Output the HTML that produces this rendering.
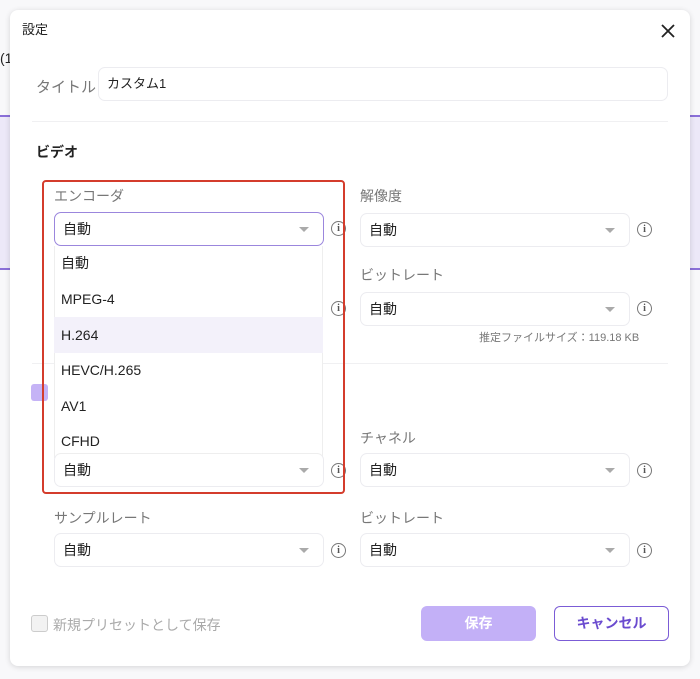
<!DOCTYPE html>
<html><head><meta charset="utf-8"><style>
*{box-sizing:border-box;margin:0;padding:0}
body{width:700px;height:679px;position:relative;overflow:hidden;background:#f8f8fa;font-family:"Liberation Sans","Noto Sans CJK JP",sans-serif;color:#222}
.a{position:absolute}
.dlg{left:10px;top:10px;width:680px;height:656px;background:#fff;border-radius:8px;box-shadow:0 1px 6px rgba(0,0,0,.15)}
.lbl{font-size:14px;color:#777}
.sel{position:absolute;height:34px;width:270px;border:1px solid #ececf0;border-radius:7px;background:#fff;font-size:14px;padding-left:8px;line-height:32px;color:#222}
.sel:after{content:"";position:absolute;right:14px;top:14px;border-left:5px solid transparent;border-right:5px solid transparent;border-top:5px solid #aaa}
.info{position:absolute;width:15px;height:15px;border:1.2px solid #777;border-radius:50%;font-size:10px;line-height:13px;text-align:center;color:#555;font-family:"Liberation Serif",serif;font-weight:bold}
.it{position:absolute;left:54px;width:269px;height:36px;font-size:14px;line-height:36px;padding-left:7px;color:#222}
</style></head><body>
<div class="a" style="left:0;top:115px;width:10px;height:155px;background:#ece8f8;border-top:2px solid #8a6fd8;border-bottom:2px solid #8a6fd8"></div>
<div class="a" style="left:690px;top:115px;width:10px;height:155px;background:#ece8f8;border-top:2px solid #8a6fd8;border-bottom:2px solid #8a6fd8"></div>
<div class="a" style="left:0;top:50px;font-size:14px">(1</div>
<div class="a dlg"></div>
<div class="a" style="left:22px;top:19px;font-size:13px">設定</div>
<svg class="a" style="left:660px;top:23px" width="16" height="16"><path d="M2 2L14 14M14 2L2 14" stroke="#222" stroke-width="1.8"/></svg>
<div class="a lbl" style="left:36px;top:76px;font-size:15px">タイトル</div>
<div class="a" style="left:98px;top:67px;width:570px;height:34px;border:1px solid #ececf0;border-radius:7px;font-size:13px;line-height:32px;padding-left:8px">カスタム1</div>
<div class="a" style="left:32px;top:121px;width:636px;height:1px;background:#f0f0f2"></div>
<div class="a" style="left:36px;top:142px;font-size:14px;font-weight:bold">ビデオ</div>
<div class="a lbl" style="left:54px;top:186px">エンコーダ</div>
<div class="a lbl" style="left:360px;top:186px">解像度</div>
<div class="sel" style="left:54px;top:212px;border-color:#9b86dd">自動</div>
<div class="info" style="left:331px;top:221px">i</div>
<div class="sel" style="left:360px;top:213px">自動</div>
<div class="info" style="left:637px;top:222px">i</div>
<div class="a lbl" style="left:360px;top:265px">ビットレート</div>
<div class="sel" style="left:360px;top:292px">自動</div>
<div class="info" style="left:331px;top:301px">i</div>
<div class="info" style="left:637px;top:301px">i</div>
<div class="a" style="left:479px;top:329px;font-size:11px;color:#777">推定ファイルサイズ：119.18 KB</div>
<div class="a" style="left:32px;top:363px;width:636px;height:1px;background:#f0f0f2"></div>
<div class="a" style="left:31px;top:384px;width:17px;height:17px;background:#c5b3f6;border-radius:3px"></div>
<div class="a lbl" style="left:360px;top:428px">チャネル</div>
<div class="sel" style="left:360px;top:453px">自動</div>
<div class="info" style="left:637px;top:463px">i</div>
<div class="a lbl" style="left:54px;top:508px">サンプルレート</div>
<div class="a lbl" style="left:360px;top:508px">ビットレート</div>
<div class="sel" style="left:54px;top:533px">自動</div>
<div class="info" style="left:331px;top:543px">i</div>
<div class="sel" style="left:360px;top:533px">自動</div>
<div class="info" style="left:637px;top:543px">i</div>
<div class="a" style="left:54px;top:246px;width:269px;height:212px;background:#fff;border:1px solid #eee;border-top:none"></div>
<div class="it" style="top:245px">自動</div>
<div class="it" style="top:281px">MPEG-4</div>
<div class="it" style="top:317px;background:#f3f1fa">H.264</div>
<div class="it" style="top:352px">HEVC/H.265</div>
<div class="it" style="top:388px">AV1</div>
<div class="it" style="top:423px">CFHD</div>
<div class="sel" style="left:54px;top:453px;border-top-color:#eee">自動</div>
<div class="info" style="left:331px;top:463px">i</div>
<div class="a" style="left:42px;top:180px;width:303px;height:314px;border:2px solid #d43c2c;border-radius:4px"></div>
<div class="a" style="left:31px;top:615px;width:17px;height:17px;border:1.5px solid #ccc;border-radius:3px;background:#f2f2f2"></div>
<div class="a" style="left:53px;top:615px;font-size:14px;color:#aaa">新規プリセットとして保存</div>
<div class="a" style="left:421px;top:606px;width:115px;height:35px;background:#c3b0f7;border-radius:6px;color:#fff;font-size:14px;font-weight:bold;text-align:center;line-height:35px">保存</div>
<div class="a" style="left:554px;top:606px;width:115px;height:35px;border:1.5px solid #7b5cd6;border-radius:6px;color:#6a4bcf;font-size:14px;font-weight:bold;text-align:center;line-height:32px">キャンセル</div>
</body></html>
